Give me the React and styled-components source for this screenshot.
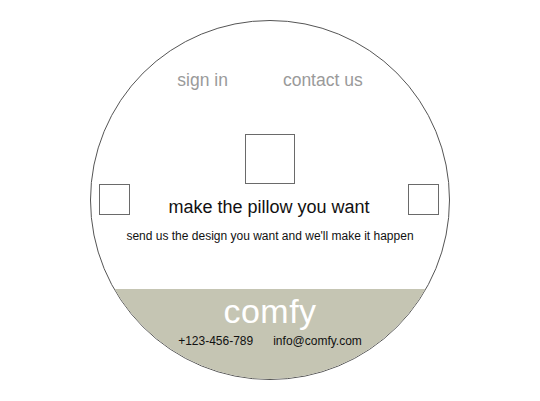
import React from "react";
import styled, { createGlobalStyle } from "styled-components";

const GlobalStyle = createGlobalStyle`
  html, body {
    margin: 0;
    padding: 0;
    background: #fff;
  }
  body {
    font-family: "Liberation Sans", Arial, sans-serif;
  }
`;

function App() {
  const links = ["sign in", "contact us"];

  return (
    <>
      <GlobalStyle />
      <Page>
        <Circle>
          <Nav>
            {links.map((link) => (
              <NavLink key={link}>{link}</NavLink>
            ))}
          </Nav>
          <Swatch size={50} />
          <TitleRow>
            <Swatch size={31} />
            <Title>make the pillow you want</Title>
            <Swatch size={31} />
          </TitleRow>
          <Subtitle>send us the design you want and we'll make it happen</Subtitle>
          <Footer>
            <Brand>comfy</Brand>
            <ContactRow>
              <span>+123-456-789</span>
              <span>info@comfy.com</span>
            </ContactRow>
          </Footer>
        </Circle>
      </Page>
    </>
  );
}

export default App;

const Page = styled.div`
  width: 540px;
  height: 401px;
  padding-top: 20px;
  box-sizing: border-box;
`;

const Circle = styled.div`
  width: 360px;
  height: 360px;
  margin: 0 auto;
  box-sizing: border-box;
  border: 1px solid #555;
  border-radius: 50%;
  overflow: hidden;
  display: flex;
  flex-direction: column;
  align-items: center;
  padding-top: 49px;
`;

const Nav = styled.nav`
  display: flex;
  gap: 55px;
`;

const NavLink = styled.a`
  font-size: 17.5px;
  line-height: 20px;
  color: #9a9a9a;
  cursor: pointer;
`;

const Swatch = styled.div`
  width: ${(p) => p.size}px;
  height: ${(p) => p.size}px;
  flex-shrink: 0;
  box-sizing: border-box;
  border: 1px solid #6a6a6a;
  background: #fff;
  margin-top: ${(p) => (p.size > 40 ? "44px" : "0")};
`;

const TitleRow = styled.div`
  align-self: stretch;
  display: flex;
  justify-content: space-between;
  align-items: flex-start;
  padding: 0 10px 0 8px;
`;

const Title = styled.h1`
  margin: 13px 0 0;
  font-size: 18px;
  line-height: 21px;
  font-weight: normal;
  color: #111;
`;

const Subtitle = styled.p`
  margin: 11px 0 0;
  font-size: 12px;
  line-height: 14px;
  color: #111;
`;

const Footer = styled.footer`
  align-self: stretch;
  flex: 1;
  margin-top: 46px;
  background: #c5c5b3;
  display: flex;
  flex-direction: column;
  align-items: center;
  padding-top: 3px;
`;

const Brand = styled.div`
  font-size: 34px;
  line-height: 38px;
  letter-spacing: 0.5px;
  color: #fff;
`;

const ContactRow = styled.div`
  display: flex;
  gap: 20px;
  margin-top: 4px;
  font-size: 12px;
  line-height: 14px;
  color: #111;
`;
